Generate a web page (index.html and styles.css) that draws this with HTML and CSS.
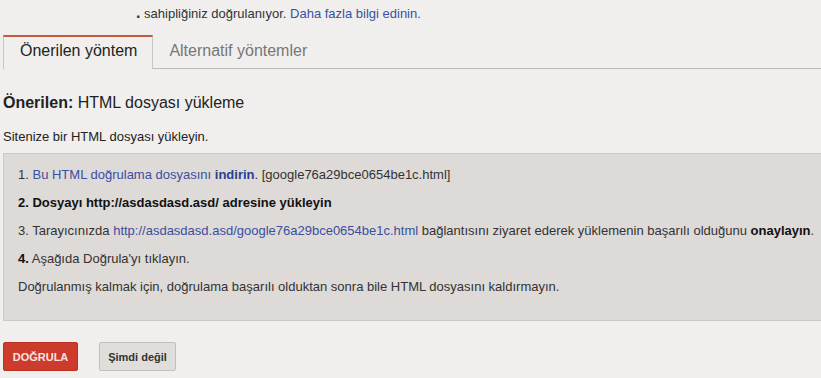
FILE: index.html
```html
<!DOCTYPE html>
<html lang="tr">
<head>
    <meta charset="UTF-8" />
    <title>Doğrulama</title>
    <link rel="stylesheet" href="styles.css">
</head>
<body>
    <p class="intro"><b>.</b> sahipliğiniz doğrulanıyor. <a href="#">Daha fazla bilgi edinin.</a></p>

    <div class="tabs">
        <div class="tab active">Önerilen yöntem</div>
        <div class="tab">Alternatif yöntemler</div>
        <div class="tab-fill"></div>
    </div>

    <h2 class="method-title"><b>Önerilen:</b> HTML dosyası yükleme</h2>
    <p class="lead">Sitenize bir HTML dosyası yükleyin.</p>

    <div class="steps">
        <p class="step">1. <a href="#">Bu HTML doğrulama dosyasını <b>indirin</b></a>. [google76a29bce0654be1c.html]</p>
        <p class="step"><b>2. Dosyayı http://asdasdasd.asd/ adresine yükleyin</b></p>
        <p class="step">3. Tarayıcınızda <a href="#">http://asdasdasd.asd/google76a29bce0654be1c.html</a> bağlantısını ziyaret ederek yüklemenin başarılı olduğunu <b>onaylayın</b>.</p>
        <p class="step"><b>4.</b> Aşağıda Doğrula'yı tıklayın.</p>
        <p class="step">Doğrulanmış kalmak için, doğrulama başarılı olduktan sonra bile HTML dosyasını kaldırmayın.</p>
    </div>

    <div class="actions">
        <button class="btn btn-primary">DOĞRULA</button>
        <button class="btn btn-secondary">Şimdi değil</button>
    </div>
</body>
</html>
```

FILE: styles.css
```css
/* Reset */
* {
    box-sizing: border-box;
    margin: 0;
    padding: 0;
}

body {
    background-color: #f0efed;
    color: #222;
    font-family: 'Liberation Sans', Arial, sans-serif;
    font-size: 13px;
    padding: 0 0 0 3px;
    overflow: hidden;
}

a {
    color: #3a4fa0;
    text-decoration: none;
}

/* Top line */
.intro {
    padding: 6px 0 0 133px;
    height: 35px;
    color: #333;
}

.intro b {
    font-size: 16px;
    line-height: 13px;
}

/* Tabs */
.tabs {
    display: flex;
    height: 34px;
}

.tab {
    font-size: 16px;
    color: #777;
    padding: 7px 18px 0 16px;
    border-bottom: 1px solid #bdbab7;
}

.tab.active {
    color: #222;
    padding-left: 16px;
    padding-right: 15px;
    border-top: 2px solid #c25a3e;
    border-left: 1px solid #c8c5c2;
    border-right: 1px solid #c8c5c2;
    border-bottom: none;
    padding-top: 5px;
}

.tab-fill {
    flex: 1;
    border-bottom: 1px solid #bdbab7;
}

/* Method */
.method-title {
    font-size: 16px;
    font-weight: normal;
    color: #222;
    margin-top: 25px;
}

.lead {
    margin-top: 17px;
    color: #222;
}

/* Steps box */
.steps {
    margin-top: 9px;
    margin-right: -4px;
    background-color: #dddad7;
    border: 1px solid #cbc8c5;
    padding: 13px 0 0 14px;
    height: 168px;
}

.step {
    color: #333;
    line-height: 15px;
    margin-bottom: 13px;
    white-space: nowrap;
}

.step b {
    color: #111;
}

.step a b {
    color: #2c3f8c;
}

/* Buttons */
.actions {
    display: flex;
    gap: 21px;
    margin-top: 21px;
}

.btn {
    font-family: 'Liberation Sans', Arial, sans-serif;
    font-size: 11px;
    font-weight: bold;
    height: 29px;
    border-radius: 2px;
    cursor: pointer;
}

.btn-primary {
    width: 75px;
    background-color: #cc3b2b;
    border: 1px solid #b8321f;
    color: #f4e4e0;
}

.btn-secondary {
    width: 77px;
    background-color: #e0deda;
    border: 1px solid #c3c0bc;
    color: #333;
}
```
